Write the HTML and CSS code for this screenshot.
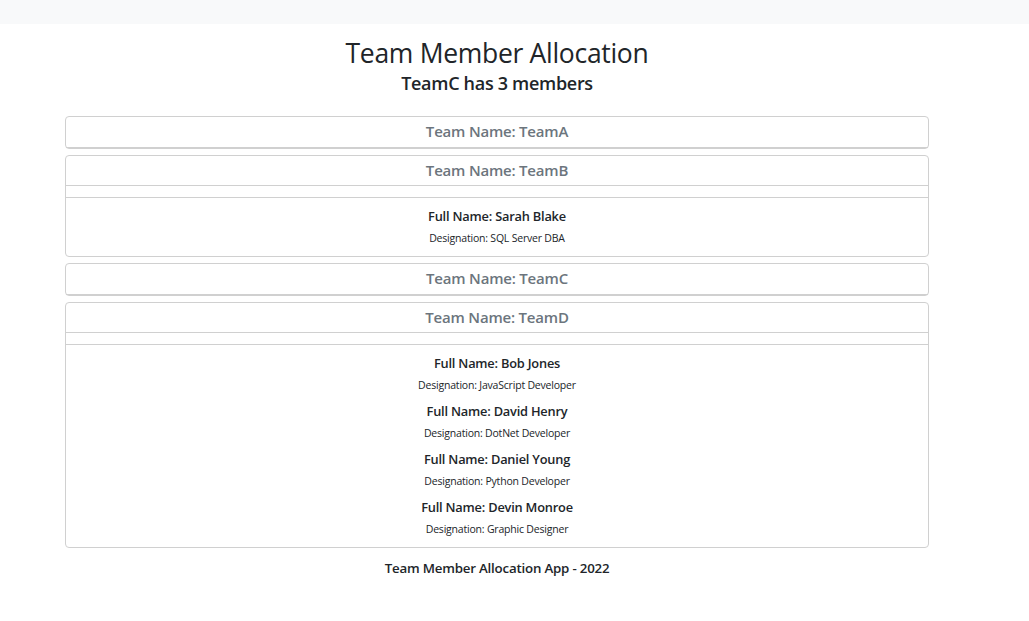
FILE: index.html
```html
<!DOCTYPE html>
<html>
<head>
<meta charset="utf-8">
<link rel="stylesheet" href="styles.css">
</head>
<body>
<nav class="topbar"></nav>
<main class="page">
  <h1 class="title">Team Member Allocation</h1>
  <h2 class="subtitle">TeamC has 3 members</h2>
  <div class="cards">
    <section class="card">
      <div class="card-header">Team Name: TeamA</div>
    </section>
    <section class="card">
      <div class="card-header">Team Name: TeamB</div>
      <div class="card-spacer"></div>
      <div class="card-body">
        <div class="member">
          <div class="member-name">Full Name: Sarah Blake</div>
          <div class="member-role">Designation: SQL Server DBA</div>
        </div>
      </div>
    </section>
    <section class="card">
      <div class="card-header">Team Name: TeamC</div>
    </section>
    <section class="card">
      <div class="card-header">Team Name: TeamD</div>
      <div class="card-spacer"></div>
      <div class="card-body">
        <div class="member">
          <div class="member-name">Full Name: Bob Jones</div>
          <div class="member-role">Designation: JavaScript Developer</div>
        </div>
        <div class="member">
          <div class="member-name">Full Name: David Henry</div>
          <div class="member-role">Designation: DotNet Developer</div>
        </div>
        <div class="member">
          <div class="member-name">Full Name: Daniel Young</div>
          <div class="member-role">Designation: Python Developer</div>
        </div>
        <div class="member">
          <div class="member-name">Full Name: Devin Monroe</div>
          <div class="member-role">Designation: Graphic Designer</div>
        </div>
      </div>
    </section>
  </div>
  <footer class="footer">Team Member Allocation App - 2022</footer>
</main>
</body>
</html>
```

FILE: styles.css
```css
* { box-sizing: border-box; }
html, body { margin: 0; padding: 0; }
body {
  font-family: "Open Sans", "Noto Sans", "Liberation Sans", sans-serif;
  color: #212529;
  background: #fff;
}
.topbar {
  height: 24px;
  background: #f8f9fa;
}
.page {
  width: 864px;
  margin-left: 65px;
  text-align: center;
}
.title {
  margin: 12px 0 0;
  font-size: 26.5px;
  font-weight: 500;
  line-height: 34px;
  letter-spacing: -0.3px;
}
.subtitle {
  margin: 0;
  font-size: 18px;
  font-weight: 600;
  line-height: 26px;
  letter-spacing: -0.3px;
}
.cards {
  margin-top: 20px;
  display: flex;
  flex-direction: column;
  gap: 6px;
}
.card {
  border: 1px solid #d0d0d0;
  border-radius: 4px;
}
.card-header {
  padding: 4px 0;
  line-height: 21.5px;
  font-size: 15px;
  font-weight: 600;
  color: #6c757d;
  border-bottom: 1px solid #d0d0d0;
  letter-spacing: -0.2px;
}
.card-spacer {
  height: 12px;
  border-bottom: 1px solid #d0d0d0;
}
.card-body {
  padding: 8px 0 10px;
  display: flex;
  flex-direction: column;
  gap: 8px;
}
.member-name {
  font-size: 12.8px;
  font-weight: 600;
  line-height: 20px;
  letter-spacing: -0.2px;
}
.member-role {
  margin-top: 4px;
  font-size: 10.5px;
  line-height: 16px;
  letter-spacing: -0.2px;
}
.footer {
  margin-top: 10px;
  font-size: 13.3px;
  font-weight: 600;
  line-height: 20px;
  letter-spacing: -0.2px;
}
```
